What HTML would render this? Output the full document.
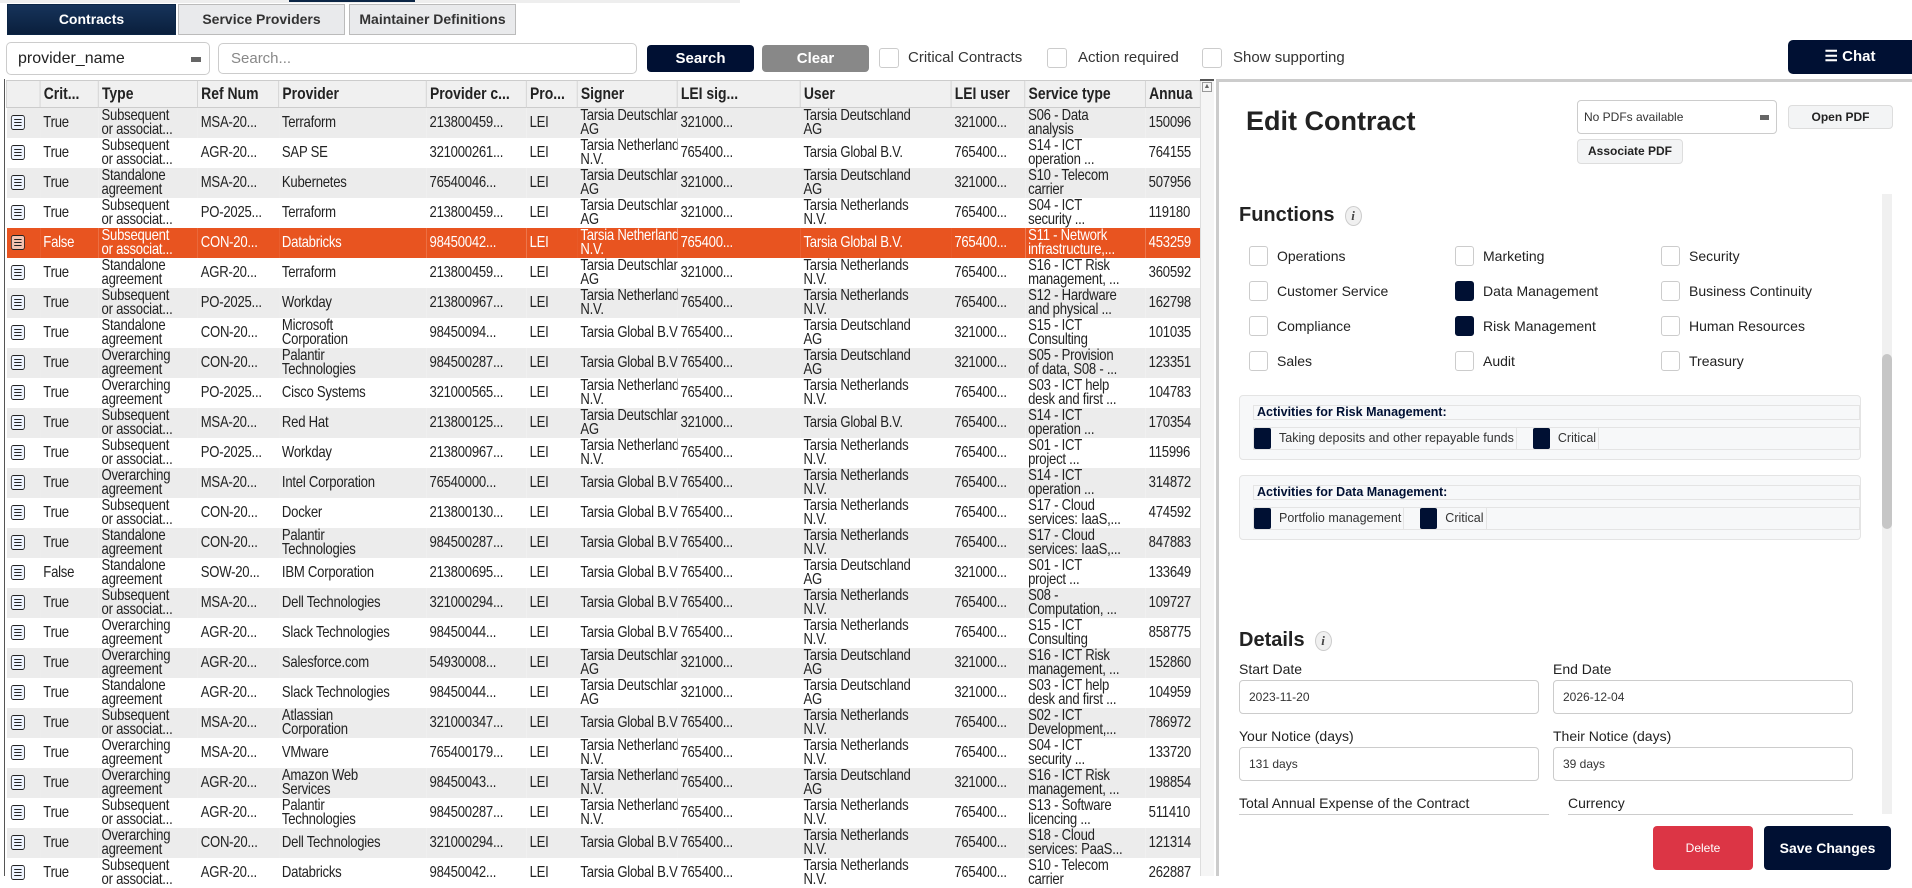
<!DOCTYPE html>
<html><head><meta charset="utf-8">
<style>
*{box-sizing:border-box;margin:0;padding:0}
body{width:1912px;height:876px;overflow:hidden;background:#fff;font-family:"Liberation Sans",sans-serif;color:#222;position:relative}
.abs{position:absolute}
.tab{position:absolute;top:4px;height:31px;border:1px solid #bbb;background:#e9eaec;font-size:14px;text-align:center;line-height:29px;color:#333;font-weight:bold}
.tab.on{color:#fff;border-color:#0b2545;background:linear-gradient(#16335a,#0a1f3c)}
.inp{position:absolute;border:1px solid #ccc;border-radius:5px;background:#fff}
.btn{position:absolute;border-radius:4px;text-align:center;font-weight:bold;font-size:15px}
.cb{position:absolute;width:20px;height:20px;border:1.5px solid #ccc;border-radius:3px;background:#fff}
.lbl{position:absolute;font-size:15px;color:#333}
table{position:absolute;left:6px;top:80px;border-collapse:collapse;table-layout:fixed;width:1456px;font-size:16px;transform:scaleX(0.82);transform-origin:0 0}
th{height:27px;background:#f0f0f0;border:1px solid #ccc;text-align:left;padding:0 4px;font-weight:bold;white-space:nowrap;overflow:hidden;font-size:17px}
td{height:30px;padding:0 4px;line-height:14px;white-space:nowrap;overflow:hidden;vertical-align:middle;border:none;letter-spacing:-0.3px}
tr:nth-child(even) td{background:#ececec}
tr.hl td{background:#e85420;color:#fff}
.ic{display:inline-block;width:17px;height:15px;border:1.5px solid #222;border-radius:3px;background:#eef4ff;position:relative;vertical-align:middle;margin-left:1px}
.ic:after{content:"";position:absolute;left:3px;right:3px;top:3px;height:5px;border-top:1.5px solid #222;border-bottom:1.5px solid #222}
.ic:before{content:"";position:absolute;left:3px;right:3px;top:5.5px;border-top:1.5px solid #222}
tr.hl .ic{background:#f3c2b0}
.fc{position:absolute;width:19px;height:20px;border:1.5px solid #ccc;border-radius:3px;background:#fff}
.fc.on{background:#001033;border-color:#001033}
.fl{position:absolute;font-size:14px;color:#222}
.h2{position:absolute;font-size:20px;font-weight:bold;color:#222;display:flex;align-items:center;gap:10px}
.info{display:inline-block;width:17px;height:20px;border:1.5px solid #ccc;border-radius:50%;background:#f0f0f0;font-size:13px;font-style:italic;text-align:center;line-height:18px;font-family:"Liberation Serif",serif;font-weight:bold;color:#444}
.fld{position:absolute;font-size:14px;color:#222}
.fin{position:absolute;height:34px;border:1px solid #ccc;border-radius:4px;font-size:12px;color:#333;padding-left:9px;line-height:32px}
.arow{position:absolute;left:1253px;width:607px;height:23px;border:1px solid #e4e4e4;display:flex;align-items:center;font-size:12.5px;color:#333}
.arow i{display:inline-block;width:17px;height:21px;background:#001033;border-radius:2px;margin-right:8px}
.arow span{margin-right:16px;border-right:1px solid #e4e4e4;padding-right:2px;line-height:21px}
</style></head><body>
<div class="abs" style="left:0;top:0;width:740px;height:3px;background:#eee"></div>
<div class="abs" style="left:289px;top:0;width:126px;height:2px;background:#0b2545"></div>
<div class="tab on" style="left:7px;width:169px">Contracts</div>
<div class="tab" style="left:178px;width:167px">Service Providers</div>
<div class="tab" style="left:349px;width:167px">Maintainer Definitions</div>

<div class="inp" style="left:6px;top:42px;width:204px;height:33px;font-size:16px;line-height:31px;padding-left:11px;color:#222">provider_name<span class="abs" style="left:184px;top:14px;width:10px;height:5px;background:#666"></span></div>
<div class="inp" style="left:218px;top:43px;width:419px;height:31px;font-size:15px;line-height:29px;padding-left:12px;color:#888">Search...</div>
<div class="btn" style="left:647px;top:45px;width:107px;height:27px;background:#001033;color:#fff;line-height:27px">Search</div>
<div class="btn" style="left:762px;top:45px;width:107px;height:27px;background:#888;color:#fff;line-height:27px">Clear</div>
<div class="cb" style="left:879px;top:48px"></div><div class="lbl" style="left:908px;top:49px">Critical Contracts</div>
<div class="cb" style="left:1047px;top:48px"></div><div class="lbl" style="left:1078px;top:49px">Action required</div>
<div class="cb" style="left:1202px;top:48px"></div><div class="lbl" style="left:1233px;top:49px">Show supporting</div>
<div class="btn" style="left:1788px;top:40px;width:124px;height:34px;background:#001033;color:#fff;line-height:34px;border-radius:5px 0 0 5px">☰ Chat</div>

<div class="abs" style="left:4px;top:79px;width:1211px;height:797px;border-left:1px solid #555"></div>
<table>
<colgroup><col style="width:41px"><col style="width:71px"><col style="width:121px"><col style="width:99px"><col style="width:180px"><col style="width:122px"><col style="width:62px"><col style="width:122px"><col style="width:150px"><col style="width:184px"><col style="width:90px"><col style="width:147px"><col style="width:67px"></colgroup>
<tr><th></th><th>Crit...</th><th>Type</th><th>Ref Num</th><th>Provider</th><th>Provider c...</th><th>Pro...</th><th>Signer</th><th>LEI sig...</th><th>User</th><th>LEI user</th><th>Service type</th><th>Annua</th></tr>
<tr><td><i class="ic"></i></td><td>True</td><td>Subsequent<br>or associat...</td><td>MSA-20...</td><td>Terraform</td><td>213800459...</td><td>LEI</td><td>Tarsia Deutschland<br>AG</td><td>321000...</td><td>Tarsia Deutschland<br>AG</td><td>321000...</td><td>S06 - Data<br>analysis</td><td>150096</td></tr>
<tr><td><i class="ic"></i></td><td>True</td><td>Subsequent<br>or associat...</td><td>AGR-20...</td><td>SAP SE</td><td>321000261...</td><td>LEI</td><td>Tarsia Netherlands<br>N.V.</td><td>765400...</td><td>Tarsia Global B.V.</td><td>765400...</td><td>S14 - ICT<br>operation ...</td><td>764155</td></tr>
<tr><td><i class="ic"></i></td><td>True</td><td>Standalone<br>agreement</td><td>MSA-20...</td><td>Kubernetes</td><td>76540046...</td><td>LEI</td><td>Tarsia Deutschland<br>AG</td><td>321000...</td><td>Tarsia Deutschland<br>AG</td><td>321000...</td><td>S10 - Telecom<br>carrier</td><td>507956</td></tr>
<tr><td><i class="ic"></i></td><td>True</td><td>Subsequent<br>or associat...</td><td>PO-2025...</td><td>Terraform</td><td>213800459...</td><td>LEI</td><td>Tarsia Deutschland<br>AG</td><td>321000...</td><td>Tarsia Netherlands<br>N.V.</td><td>765400...</td><td>S04 - ICT<br>security ...</td><td>119180</td></tr>
<tr class="hl"><td><i class="ic"></i></td><td>False</td><td>Subsequent<br>or associat...</td><td>CON-20...</td><td>Databricks</td><td>98450042...</td><td>LEI</td><td>Tarsia Netherlands<br>N.V.</td><td>765400...</td><td>Tarsia Global B.V.</td><td>765400...</td><td>S11 - Network<br>infrastructure,...</td><td>453259</td></tr>
<tr><td><i class="ic"></i></td><td>True</td><td>Standalone<br>agreement</td><td>AGR-20...</td><td>Terraform</td><td>213800459...</td><td>LEI</td><td>Tarsia Deutschland<br>AG</td><td>321000...</td><td>Tarsia Netherlands<br>N.V.</td><td>765400...</td><td>S16 - ICT Risk<br>management, ...</td><td>360592</td></tr>
<tr><td><i class="ic"></i></td><td>True</td><td>Subsequent<br>or associat...</td><td>PO-2025...</td><td>Workday</td><td>213800967...</td><td>LEI</td><td>Tarsia Netherlands<br>N.V.</td><td>765400...</td><td>Tarsia Netherlands<br>N.V.</td><td>765400...</td><td>S12 - Hardware<br>and physical ...</td><td>162798</td></tr>
<tr><td><i class="ic"></i></td><td>True</td><td>Standalone<br>agreement</td><td>CON-20...</td><td>Microsoft<br>Corporation</td><td>98450094...</td><td>LEI</td><td>Tarsia Global B.V.</td><td>765400...</td><td>Tarsia Deutschland<br>AG</td><td>321000...</td><td>S15 - ICT<br>Consulting</td><td>101035</td></tr>
<tr><td><i class="ic"></i></td><td>True</td><td>Overarching<br>agreement</td><td>CON-20...</td><td>Palantir<br>Technologies</td><td>984500287...</td><td>LEI</td><td>Tarsia Global B.V.</td><td>765400...</td><td>Tarsia Deutschland<br>AG</td><td>321000...</td><td>S05 - Provision<br>of data, S08 - ...</td><td>123351</td></tr>
<tr><td><i class="ic"></i></td><td>True</td><td>Overarching<br>agreement</td><td>PO-2025...</td><td>Cisco Systems</td><td>321000565...</td><td>LEI</td><td>Tarsia Netherlands<br>N.V.</td><td>765400...</td><td>Tarsia Netherlands<br>N.V.</td><td>765400...</td><td>S03 - ICT help<br>desk and first ...</td><td>104783</td></tr>
<tr><td><i class="ic"></i></td><td>True</td><td>Subsequent<br>or associat...</td><td>MSA-20...</td><td>Red Hat</td><td>213800125...</td><td>LEI</td><td>Tarsia Deutschland<br>AG</td><td>321000...</td><td>Tarsia Global B.V.</td><td>765400...</td><td>S14 - ICT<br>operation ...</td><td>170354</td></tr>
<tr><td><i class="ic"></i></td><td>True</td><td>Subsequent<br>or associat...</td><td>PO-2025...</td><td>Workday</td><td>213800967...</td><td>LEI</td><td>Tarsia Netherlands<br>N.V.</td><td>765400...</td><td>Tarsia Netherlands<br>N.V.</td><td>765400...</td><td>S01 - ICT<br>project ...</td><td>115996</td></tr>
<tr><td><i class="ic"></i></td><td>True</td><td>Overarching<br>agreement</td><td>MSA-20...</td><td>Intel Corporation</td><td>76540000...</td><td>LEI</td><td>Tarsia Global B.V.</td><td>765400...</td><td>Tarsia Netherlands<br>N.V.</td><td>765400...</td><td>S14 - ICT<br>operation ...</td><td>314872</td></tr>
<tr><td><i class="ic"></i></td><td>True</td><td>Subsequent<br>or associat...</td><td>CON-20...</td><td>Docker</td><td>213800130...</td><td>LEI</td><td>Tarsia Global B.V.</td><td>765400...</td><td>Tarsia Netherlands<br>N.V.</td><td>765400...</td><td>S17 - Cloud<br>services: IaaS,...</td><td>474592</td></tr>
<tr><td><i class="ic"></i></td><td>True</td><td>Standalone<br>agreement</td><td>CON-20...</td><td>Palantir<br>Technologies</td><td>984500287...</td><td>LEI</td><td>Tarsia Global B.V.</td><td>765400...</td><td>Tarsia Netherlands<br>N.V.</td><td>765400...</td><td>S17 - Cloud<br>services: IaaS,...</td><td>847883</td></tr>
<tr><td><i class="ic"></i></td><td>False</td><td>Standalone<br>agreement</td><td>SOW-20...</td><td>IBM Corporation</td><td>213800695...</td><td>LEI</td><td>Tarsia Global B.V.</td><td>765400...</td><td>Tarsia Deutschland<br>AG</td><td>321000...</td><td>S01 - ICT<br>project ...</td><td>133649</td></tr>
<tr><td><i class="ic"></i></td><td>True</td><td>Subsequent<br>or associat...</td><td>MSA-20...</td><td>Dell Technologies</td><td>321000294...</td><td>LEI</td><td>Tarsia Global B.V.</td><td>765400...</td><td>Tarsia Netherlands<br>N.V.</td><td>765400...</td><td>S08 -<br>Computation, ...</td><td>109727</td></tr>
<tr><td><i class="ic"></i></td><td>True</td><td>Overarching<br>agreement</td><td>AGR-20...</td><td>Slack Technologies</td><td>98450044...</td><td>LEI</td><td>Tarsia Global B.V.</td><td>765400...</td><td>Tarsia Netherlands<br>N.V.</td><td>765400...</td><td>S15 - ICT<br>Consulting</td><td>858775</td></tr>
<tr><td><i class="ic"></i></td><td>True</td><td>Overarching<br>agreement</td><td>AGR-20...</td><td>Salesforce.com</td><td>54930008...</td><td>LEI</td><td>Tarsia Deutschland<br>AG</td><td>321000...</td><td>Tarsia Deutschland<br>AG</td><td>321000...</td><td>S16 - ICT Risk<br>management, ...</td><td>152860</td></tr>
<tr><td><i class="ic"></i></td><td>True</td><td>Standalone<br>agreement</td><td>AGR-20...</td><td>Slack Technologies</td><td>98450044...</td><td>LEI</td><td>Tarsia Deutschland<br>AG</td><td>321000...</td><td>Tarsia Deutschland<br>AG</td><td>321000...</td><td>S03 - ICT help<br>desk and first ...</td><td>104959</td></tr>
<tr><td><i class="ic"></i></td><td>True</td><td>Subsequent<br>or associat...</td><td>MSA-20...</td><td>Atlassian<br>Corporation</td><td>321000347...</td><td>LEI</td><td>Tarsia Global B.V.</td><td>765400...</td><td>Tarsia Netherlands<br>N.V.</td><td>765400...</td><td>S02 - ICT<br>Development,...</td><td>786972</td></tr>
<tr><td><i class="ic"></i></td><td>True</td><td>Overarching<br>agreement</td><td>MSA-20...</td><td>VMware</td><td>765400179...</td><td>LEI</td><td>Tarsia Netherlands<br>N.V.</td><td>765400...</td><td>Tarsia Netherlands<br>N.V.</td><td>765400...</td><td>S04 - ICT<br>security ...</td><td>133720</td></tr>
<tr><td><i class="ic"></i></td><td>True</td><td>Overarching<br>agreement</td><td>AGR-20...</td><td>Amazon Web<br>Services</td><td>98450043...</td><td>LEI</td><td>Tarsia Netherlands<br>N.V.</td><td>765400...</td><td>Tarsia Deutschland<br>AG</td><td>321000...</td><td>S16 - ICT Risk<br>management, ...</td><td>198854</td></tr>
<tr><td><i class="ic"></i></td><td>True</td><td>Subsequent<br>or associat...</td><td>AGR-20...</td><td>Palantir<br>Technologies</td><td>984500287...</td><td>LEI</td><td>Tarsia Netherlands<br>N.V.</td><td>765400...</td><td>Tarsia Netherlands<br>N.V.</td><td>765400...</td><td>S13 - Software<br>licencing ...</td><td>511410</td></tr>
<tr><td><i class="ic"></i></td><td>True</td><td>Overarching<br>agreement</td><td>CON-20...</td><td>Dell Technologies</td><td>321000294...</td><td>LEI</td><td>Tarsia Global B.V.</td><td>765400...</td><td>Tarsia Netherlands<br>N.V.</td><td>765400...</td><td>S18 - Cloud<br>services: PaaS...</td><td>121314</td></tr>
<tr><td><i class="ic"></i></td><td>True</td><td>Subsequent<br>or associat...</td><td>AGR-20...</td><td>Databricks</td><td>98450042...</td><td>LEI</td><td>Tarsia Global B.V.</td><td>765400...</td><td>Tarsia Netherlands<br>N.V.</td><td>765400...</td><td>S10 - Telecom<br>carrier</td><td>262887</td></tr>
</table>
<div class="abs" style="left:1200px;top:80px;width:14px;height:796px;background:#f5f5f5;border-left:1px solid #ddd"></div>
<div class="abs" style="left:1202px;top:82px;width:10px;height:10px;border:1px solid #999;font-size:7px;text-align:center;color:#666;line-height:8px">▲</div>
<div class="abs" style="left:1200px;top:79px;width:14px;height:2px;background:#555"></div>

<div class="abs" style="left:1216px;top:79px;width:696px;height:797px;border-left:3px solid #ccc;border-top:3px solid #ccc;background:#fff"></div>
<div class="abs" style="left:1246px;top:106px;font-size:27px;font-weight:bold;color:#222">Edit Contract</div>
<div class="inp" style="left:1577px;top:100px;width:200px;height:34px;border-radius:4px"></div>
<div class="abs" style="left:1584px;top:110px;font-size:12px;color:#333">No PDFs available</div>
<div class="abs" style="left:1760px;top:115px;width:9px;height:5px;background:#666"></div>
<div class="btn" style="left:1788px;top:105px;width:105px;height:24px;background:#f3f4f5;border:1px solid #ddd;font-size:12px;line-height:22px;color:#222">Open PDF</div>
<div class="btn" style="left:1577px;top:139px;width:106px;height:25px;background:#f3f4f5;border:1px solid #ddd;font-size:12px;line-height:23px;color:#222">Associate PDF</div>

<div class="abs" style="left:1882px;top:194px;width:10px;height:620px;background:#f0f0f0"></div>
<div class="abs" style="left:1882px;top:354px;width:10px;height:175px;background:#c6c6c6;border-radius:5px"></div>

<div class="h2" style="left:1239px;top:204px">Functions <span class="info">i</span></div>
<div class="fc" style="left:1249px;top:246px"></div><div class="fl" style="left:1277px;top:248px">Operations</div>
<div class="fc" style="left:1455px;top:246px"></div><div class="fl" style="left:1483px;top:248px">Marketing</div>
<div class="fc" style="left:1661px;top:246px"></div><div class="fl" style="left:1689px;top:248px">Security</div>
<div class="fc" style="left:1249px;top:281px"></div><div class="fl" style="left:1277px;top:283px">Customer Service</div>
<div class="fc on" style="left:1455px;top:281px"></div><div class="fl" style="left:1483px;top:283px">Data Management</div>
<div class="fc" style="left:1661px;top:281px"></div><div class="fl" style="left:1689px;top:283px">Business Continuity</div>
<div class="fc" style="left:1249px;top:316px"></div><div class="fl" style="left:1277px;top:318px">Compliance</div>
<div class="fc on" style="left:1455px;top:316px"></div><div class="fl" style="left:1483px;top:318px">Risk Management</div>
<div class="fc" style="left:1661px;top:316px"></div><div class="fl" style="left:1689px;top:318px">Human Resources</div>
<div class="fc" style="left:1249px;top:351px"></div><div class="fl" style="left:1277px;top:353px">Sales</div>
<div class="fc" style="left:1455px;top:351px"></div><div class="fl" style="left:1483px;top:353px">Audit</div>
<div class="fc" style="left:1661px;top:351px"></div><div class="fl" style="left:1689px;top:353px">Treasury</div>

<div class="abs" style="left:1239px;top:395px;width:622px;height:65px;background:#f7f8f9;border:1px solid #e4e4e4;border-radius:4px"></div>
<div class="abs" style="left:1253px;top:405px;width:607px;height:15px;border:1px solid #e4e4e4;font-size:12.5px;font-weight:bold;color:#001033;line-height:13px;padding-left:3px">Activities for Risk Management:</div>
<div class="arow" style="top:427px"><i></i><span>Taking deposits and other repayable funds</span><i></i><span>Critical</span></div>

<div class="abs" style="left:1239px;top:475px;width:622px;height:65px;background:#f7f8f9;border:1px solid #e4e4e4;border-radius:4px"></div>
<div class="abs" style="left:1253px;top:485px;width:607px;height:15px;border:1px solid #e4e4e4;font-size:12.5px;font-weight:bold;color:#001033;line-height:13px;padding-left:3px">Activities for Data Management:</div>
<div class="arow" style="top:507px"><i></i><span>Portfolio management</span><i></i><span>Critical</span></div>

<div class="h2" style="left:1239px;top:629px">Details <span class="info">i</span></div>
<div class="fld" style="left:1239px;top:661px">Start Date</div>
<div class="fld" style="left:1553px;top:661px">End Date</div>
<div class="fin" style="left:1239px;top:680px;width:300px">2023-11-20</div>
<div class="fin" style="left:1553px;top:680px;width:300px">2026-12-04</div>
<div class="fld" style="left:1239px;top:728px">Your Notice (days)</div>
<div class="fld" style="left:1553px;top:728px">Their Notice (days)</div>
<div class="fin" style="left:1239px;top:747px;width:300px">131 days</div>
<div class="fin" style="left:1553px;top:747px;width:300px">39 days</div>
<div class="fld" style="left:1239px;top:795px">Total Annual Expense of the Contract</div>
<div class="fld" style="left:1568px;top:795px">Currency</div>
<div class="abs" style="left:1239px;top:814px;width:310px;height:2px;border-top:1px solid #ccc"></div>
<div class="abs" style="left:1568px;top:814px;width:285px;height:2px;border-top:1px solid #ccc"></div>

<div class="btn" style="left:1653px;top:826px;width:100px;height:44px;background:#dc3545;color:#fff;font-weight:normal;font-size:12px;line-height:44px">Delete</div>
<div class="btn" style="left:1764px;top:826px;width:127px;height:44px;background:#001033;color:#fff;font-size:14px;line-height:44px">Save Changes</div>
</body></html>
